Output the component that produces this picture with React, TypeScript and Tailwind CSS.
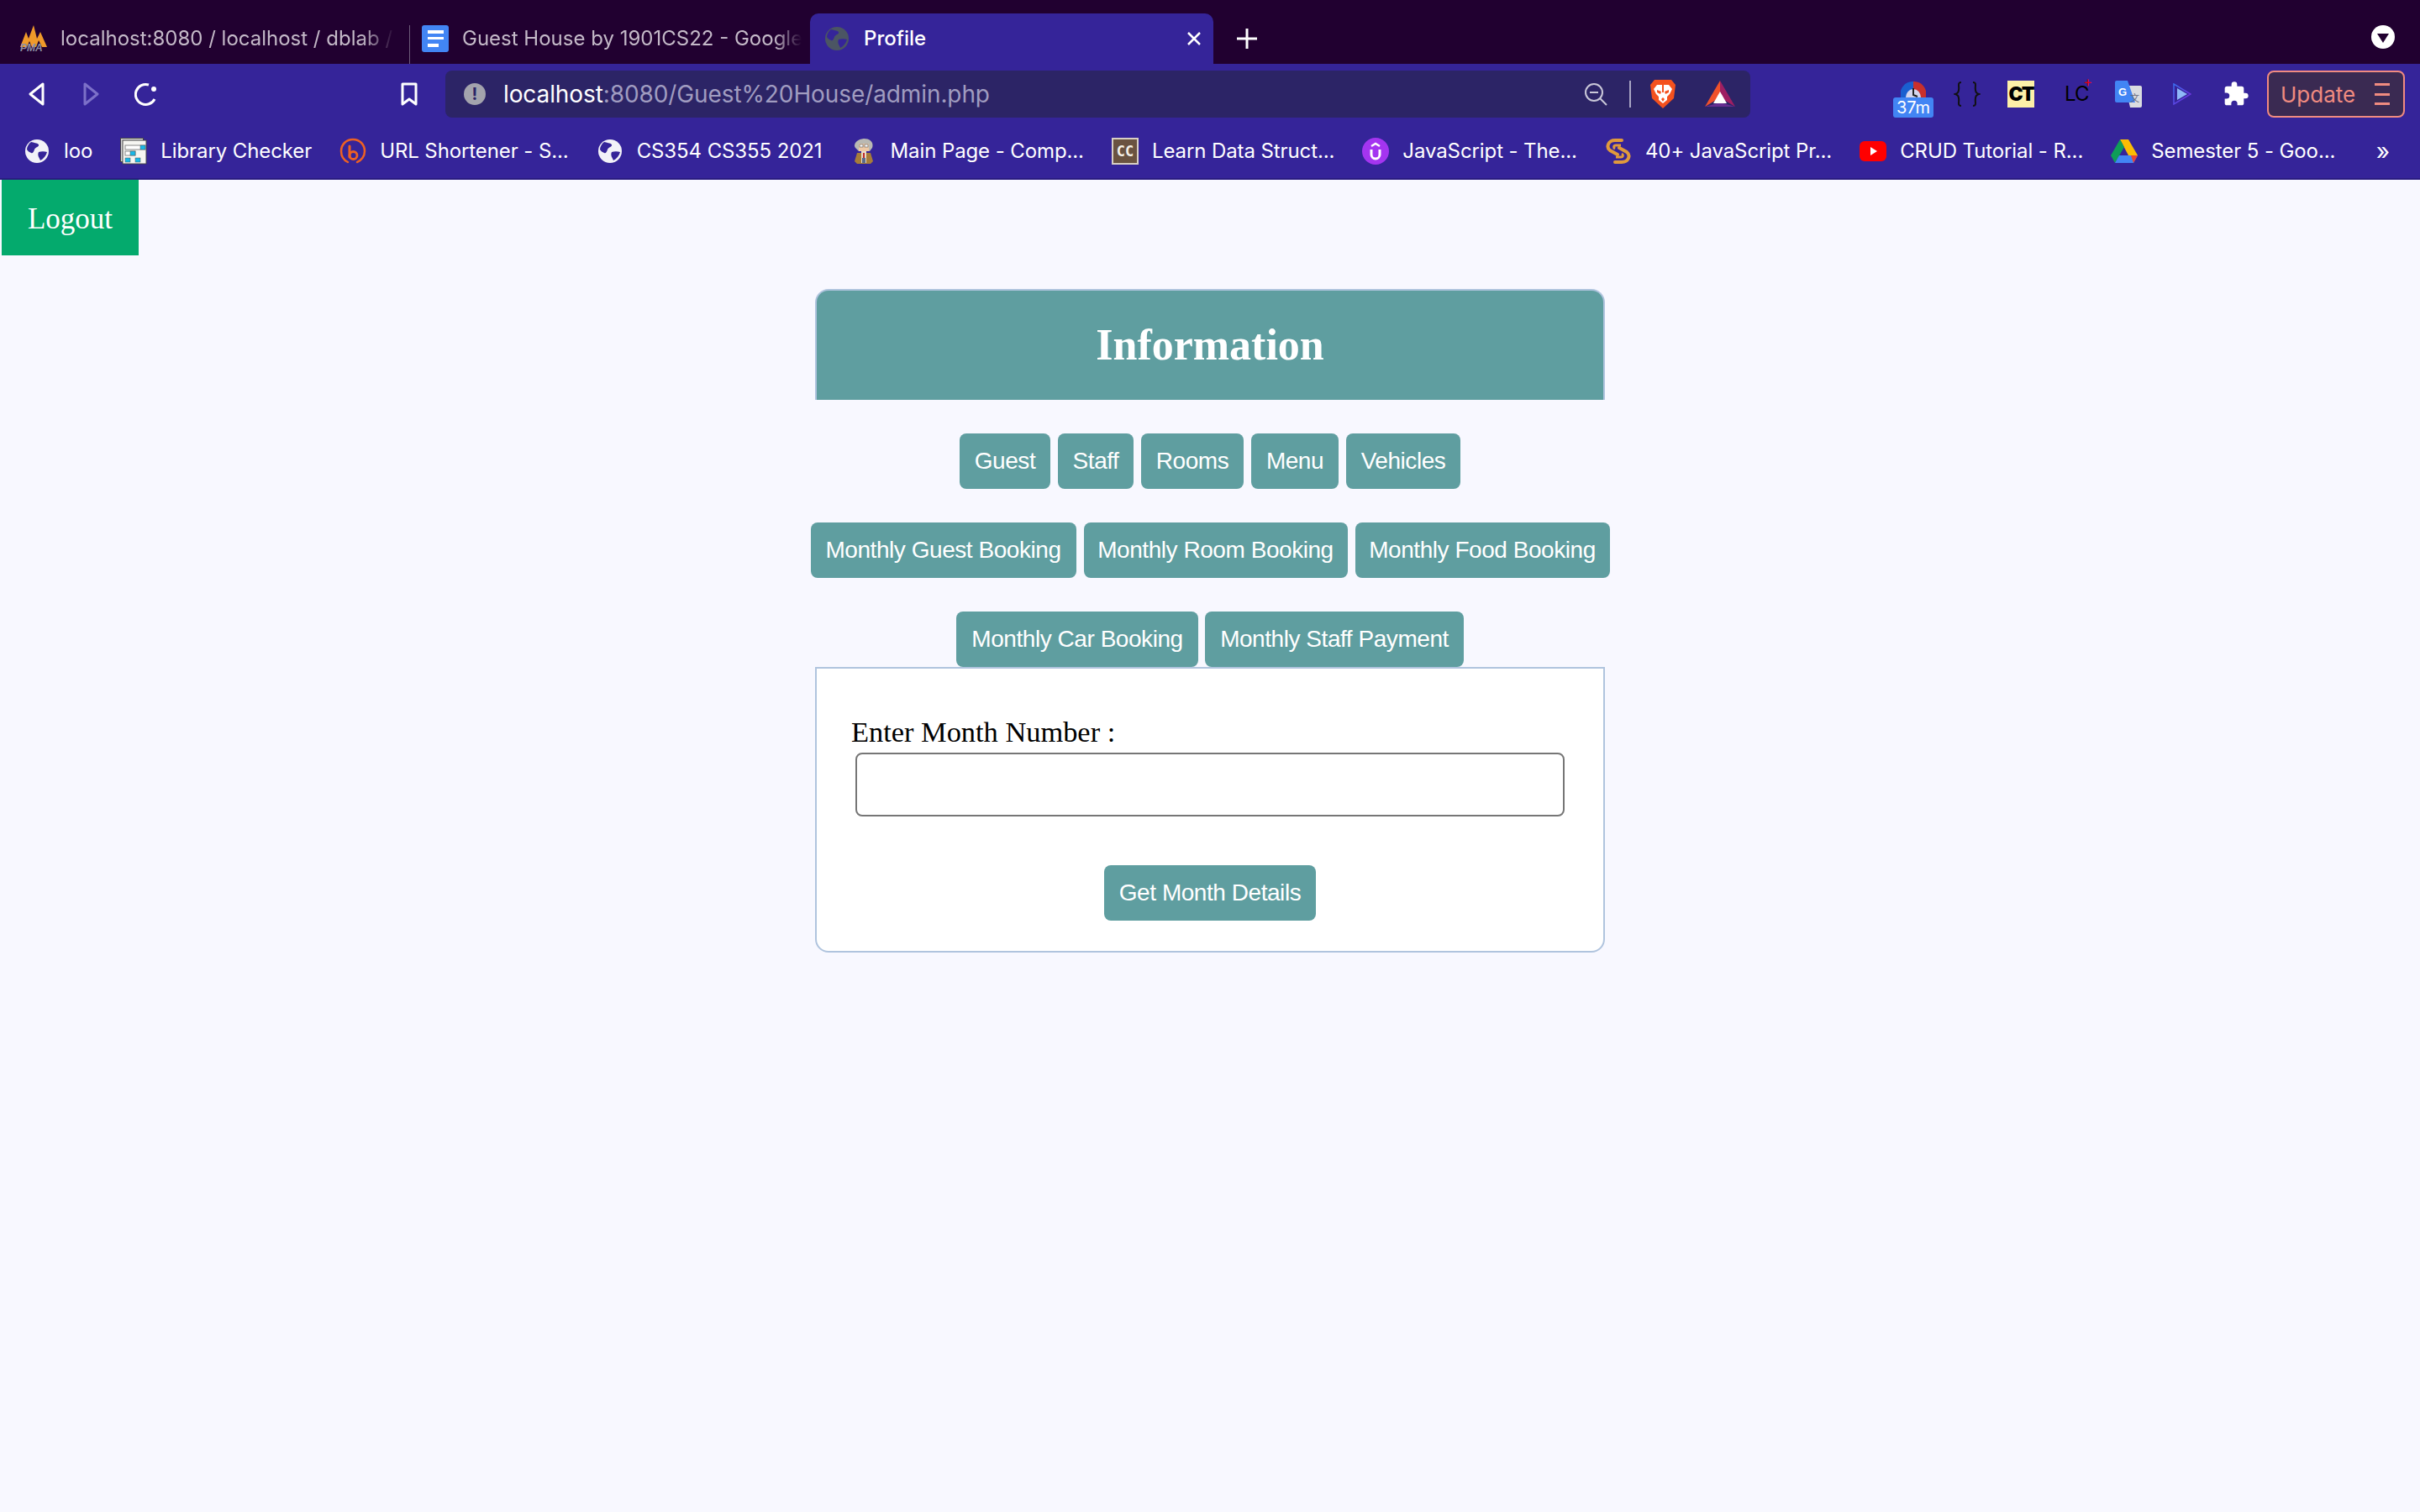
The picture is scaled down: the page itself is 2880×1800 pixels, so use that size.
import React from 'react';

const serif = "font-['Liberation_Serif',serif]";

const Globe = ({ color = '#f2f2f8', land = '#352499' }: { color?: string; land?: string }) => (
  <svg width="28" height="28" viewBox="0 0 28 28" className="shrink-0">
    <circle cx="14" cy="14" r="14" fill={color} />
    <path d="M7 3c3 1 7 1 9 3 1 3-4 3-5 6s-2 5-4 4-4-2-5-4c0-3 2-7 5-9zM16 15c3-1 7-1 10 0-1 4-4 8-8 10-1-3-4-6-2-10z" fill={land} />
  </svg>
);

const PmaIcon = () => (
  <svg width="32" height="32" viewBox="0 0 32 32" className="shrink-0">
    <path d="M0 26 7 8l3 8L16 0l4 16 4-8 8 18z" fill="#f09a2a" />
    <path d="M8 26l3-7 3 7zM19 26l3-8 4 8z" fill="#21002f" />
    <text x="0" y="31" fontSize="12" fontStyle="italic" fontWeight="700" fill="#8d8fa5" fontFamily="Liberation Sans, sans-serif">PMA</text>
  </svg>
);

const DocsIcon = () => (
  <svg width="32" height="32" viewBox="0 0 32 32" className="shrink-0">
    <rect width="32" height="32" rx="3" fill="#4285f4" />
    <rect x="7" y="6" width="19" height="4" fill="#fff" />
    <rect x="7" y="14" width="19" height="3" fill="#fff" />
    <rect x="7" y="22" width="13" height="4" fill="#fff" />
  </svg>
);

const LibraryIcon = () => (
  <svg width="32" height="32" viewBox="0 0 32 32" className="shrink-0">
    <rect x="0.5" y="0.5" width="27" height="28" fill="#d8d8d8" stroke="#444" />
    <rect x="3" y="3" width="28" height="28" fill="#f6f6f2" stroke="#444" />
    <rect x="6" y="9" width="24" height="5" fill="#fff" stroke="#888" />
    <rect x="24" y="9" width="6" height="5" fill="#18b8e8" stroke="#555" strokeWidth=".5" />
    <rect x="6" y="16" width="12" height="5" fill="#fff" stroke="#888" />
    <rect x="12" y="16" width="6" height="5" fill="#18b8e8" stroke="#555" strokeWidth=".5" />
    <rect x="6" y="24" width="6" height="5" fill="#18b8e8" stroke="#555" strokeWidth=".5" />
    <rect x="18" y="24" width="6" height="5" fill="#18b8e8" stroke="#555" strokeWidth=".5" />
  </svg>
);

const BitlyIcon = () => (
  <svg width="32" height="32" viewBox="0 0 32 32" fill="none" className="shrink-0">
    <path d="M10 29C4 26 2 21 2 16 2 8 8 2 16 2s14 6 14 14c0 6-4 11-9 13" stroke="#ee6123" strokeWidth="2.5" strokeLinecap="round" />
    <path d="M12 10v13" stroke="#ee6123" strokeWidth="3" strokeLinecap="round" />
    <circle cx="16.500" cy="21" r="4.500" stroke="#ee6123" strokeWidth="2.800" />
  </svg>
);

const WikiIcon = () => (
  <svg width="28" height="32" viewBox="0 0 28 32" className="shrink-0">
    <path d="M4 12C1 8 5 2 14 1c8 0 12 5 10 11l-3 4H8z" fill="#b9b9b3" />
    <rect x="8" y="7" width="12" height="9" fill="#eec9a6" />
    <rect x="9" y="8" width="4" height="3" fill="#fff" stroke="#666" strokeWidth=".7" />
    <rect x="15" y="8" width="4" height="3" fill="#fff" stroke="#666" strokeWidth=".7" />
    <path d="M6 18h16l3 10-3 3H6l-3-3z" fill="#a77c39" />
    <rect x="11" y="16" width="6" height="14" fill="#e8dcc8" />
    <rect x="13" y="18" width="2" height="6" fill="#c02a2a" />
    <rect x="12" y="24" width="4" height="6" fill="#5a6a8a" />
  </svg>
);

const CcIcon = () => (
  <svg width="32" height="32" viewBox="0 0 32 32" className="shrink-0">
    <rect width="32" height="32" fill="#d8cfc4" />
    <rect x="2" y="2" width="28" height="28" fill="#6a5340" />
    <text x="16" y="22" textAnchor="middle" fontSize="17" fontWeight="700" fill="#f5f1e8" fontFamily="DejaVu Sans Mono, monospace">CC</text>
  </svg>
);

const UdemyIcon = () => (
  <svg width="32" height="32" viewBox="0 0 32 32" fill="none" className="shrink-0">
    <circle cx="16" cy="16" r="16" fill="#a435f0" />
    <path d="M11 14v6a5 5 0 0 0 10 0v-6" stroke="#fff" strokeWidth="3" />
    <path d="M11 10l5-3 5 3" stroke="#fff" strokeWidth="2.500" />
  </svg>
);

const SwirlIcon = () => (
  <svg width="32" height="32" viewBox="0 0 32 32" fill="none" className="shrink-0">
    <path d="M20 3h-8C4 3 1 11 6 15l9 5" stroke="#e19a3c" strokeWidth="4" strokeLinecap="round" />
    <path d="M12 29h8c8 0 11-8 6-12l-9-5" stroke="#e19a3c" strokeWidth="4" strokeLinecap="round" />
    <path d="M19 9h-6c-3 0-3 3-1 4" stroke="#e19a3c" strokeWidth="3" />
    <path d="M13 23h6c3 0 3-3 1-4" stroke="#e19a3c" strokeWidth="3" />
  </svg>
);

const YoutubeIcon = () => (
  <svg width="32" height="24" viewBox="0 0 32 24" className="shrink-0">
    <rect width="32" height="24" rx="6" fill="#f00" />
    <path d="M13 7l8 5-8 5z" fill="#fff" />
  </svg>
);

const DriveIcon = () => (
  <svg width="32" height="32" viewBox="0 0 32 32" className="shrink-0">
    <path d="M11 2h10l11 19H21z" fill="#fbbc04" />
    <path d="M11 2 0 21l5 9 11-19z" fill="#0f9d58" />
    <path d="M5 30l5-9h22l-5 9z" fill="#4285f4" />
    <path d="M27 30l5-9h-8z" fill="#ea4335" />
  </svg>
);

const BraveIcon = () => (
  <svg width="32" height="36" viewBox="0 0 32 36" className="ml-[22px] shrink-0">
    <path d="M6 1h20l5 6-2 16-13 12L3 23 1 7z" fill="#f4511e" />
    <path d="M9 7h14l4 5-3 6-3 3v4l-5 4-5-4v-4l-3-3-3-6z" fill="#fff" />
    <path d="M9 13l5 2-1 3-4-2zM23 13l-5 2 1 3 4-2zM15 7h2v9h-2zM14 24l2-2 2 2-2 3z" fill="#f4511e" />
  </svg>
);

const BatIcon = () => (
  <svg width="36" height="32" viewBox="0 0 36 32" className="ml-[34px] shrink-0">
    <path d="M18 0 0 31l18-11z" fill="#f0512b" />
    <path d="M18 0l18 31-18-11z" fill="#9e1f63" />
    <path d="M0 31l18-5 18 5z" fill="#662d91" />
    <path d="M18 13l-8 14h16z" fill="#fff" />
  </svg>
);

const BookmarkItem = ({ icon, label }: { icon: React.ReactNode; label: string }) => (
  <div className="flex shrink-0 items-center">
    <div className="flex w-[32px] justify-center">{icon}</div>
    <span className="ml-[16px] text-[24px] leading-[32px] tracking-[-0.1px] whitespace-nowrap text-white">{label}</span>
  </div>
);

const PageButton = ({ label, width }: { label: string; width: string }) => (
  <button className={`h-[66px] ${width} shrink-0 rounded-[8px] bg-[#5f9ea0] font-['Liberation_Sans',sans-serif] text-[28px] tracking-[-0.45px] text-white`}>
    {label}
  </button>
);

export default function App() {
  return (
    <div className="flex min-h-[1800px] w-[2880px] flex-col bg-[#f8f8ff] font-['Inter',sans-serif]">
      {/* Tab strip */}
      <div className="flex h-[76px] items-end bg-[#210030] pl-[24px]">
        <div className="flex h-[76px] w-[463px] items-center gap-[16px] pt-[16px] text-[24px] whitespace-nowrap text-[#c4b9c8]">
          <PmaIcon />
          <span className="w-[398px] overflow-hidden [mask-image:linear-gradient(to_right,black_90%,transparent)]">localhost:8080 / localhost / dblab / /</span>
        </div>
        <div className="h-[46px] w-px bg-[#6d5a78]" />
        <div className="flex h-[76px] w-[476px] items-center gap-[16px] pt-[16px] pl-[14px] text-[24px] whitespace-nowrap text-[#c4b9c8]">
          <DocsIcon />
          <span className="w-[404px] overflow-hidden [mask-image:linear-gradient(to_right,black_92%,transparent)]">Guest House by 1901CS22 - Google</span>
        </div>
        <div className="flex h-[60px] w-[480px] items-center rounded-t-[10px] bg-[#352499] pr-[14px] pl-[18px] text-[24px] font-medium text-white">
          <Globe color="#4b5563" land="#352499" />
          <span className="ml-[18px]">Profile</span>
          <svg width="18" height="18" viewBox="0 0 18 18" className="ml-auto" stroke="#fff" strokeWidth="2.5">
            <path d="M2 2l14 14M16 2 2 16" />
          </svg>
        </div>
        <svg width="24" height="24" viewBox="0 0 24 24" className="mb-[18px] ml-[28px]" stroke="#fff" strokeWidth="3">
          <path d="M12 0v24M0 12h24" />
        </svg>
        <div className="mr-[30px] mb-[18px] ml-auto flex h-[28px] w-[28px] items-center justify-center rounded-full bg-white">
          <div className="mt-[3px] h-0 w-0 border-x-[7px] border-t-[11px] border-x-transparent border-t-[#210030]" />
        </div>
      </div>

      {/* Toolbar */}
      <div className="flex h-[72px] items-center bg-[#352499] pl-[34px]">
        <svg width="20" height="28" viewBox="0 0 20 28" fill="none" stroke="#fff" strokeWidth="3" strokeLinejoin="round">
          <path d="M17 2v24L2 14z" />
        </svg>
        <svg width="20" height="28" viewBox="0 0 20 28" fill="none" stroke="#7c70c8" strokeWidth="3" strokeLinejoin="round" className="ml-[44px]">
          <path d="M3 2v24l15-12z" />
        </svg>
        <svg width="28" height="28" viewBox="0 0 28 28" fill="none" stroke="#fff" strokeWidth="3" className="ml-[42px]">
          <path d="M24 20A12 12 0 1 1 17 3" />
          <circle cx="23" cy="8" r="3" fill="#fff" stroke="none" />
        </svg>
        <svg width="22" height="28" viewBox="0 0 22 28" fill="none" stroke="#fff" strokeWidth="3" strokeLinejoin="round" className="ml-[288px]">
          <path d="M3 2h16v24l-8-6-8 6z" />
        </svg>
        <div className="ml-[32px] flex h-[56px] w-[1553px] shrink-0 items-center rounded-[8px] bg-[#2c2466] pr-[18px] pl-[22px]">
          <div className="flex h-[26px] w-[26px] items-center justify-center rounded-full bg-[#a3a3ad] text-[20px] leading-none font-bold text-[#2c2466]">!</div>
          <span className="ml-[21px] text-[28px] tracking-[-0.1px] text-white">localhost</span>
          <span className="text-[28px] tracking-[-0.1px] text-[#a09cc0]">:8080/Guest%20House/admin.php</span>
          <svg width="28" height="28" viewBox="0 0 28 28" fill="none" stroke="#c9c7d8" strokeWidth="2" className="ml-auto">
            <circle cx="12" cy="12" r="10" />
            <path d="M7 12h10M19 19l8 8" />
          </svg>
          <div className="ml-[26px] h-[32px] w-[2px] bg-[#a8a5c4]" />
          <BraveIcon />
          <BatIcon />
        </div>
        <div className="ml-[170px] flex w-[48px] shrink-0 flex-col items-center pt-[12px]">
          <svg width="30" height="19" viewBox="0 0 30 19">
            <path d="M0 19a15 15 0 0 1 15-19v19z" fill="#1a5fd0" />
            <path d="M15 0a15 15 0 0 1 15 19H15z" fill="#c9302c" />
            <path d="M6 19a9 10 0 0 1 18 0z" fill="#d6d6ee" />
            <path d="M15 8v8l5 2" stroke="#222" strokeWidth="2" fill="none" />
          </svg>
          <div className="flex h-[24px] w-[48px] items-center justify-center rounded-[3px] bg-[#4285f4] text-[20px] leading-none text-white">37m</div>
        </div>
        <svg width="32" height="30" viewBox="0 0 32 30" fill="none" stroke="#111" strokeWidth="2" className="ml-[24px] shrink-0">
          <path d="M9 1C4 1 7 6 6 10c0 3-1 4-4 5 3 1 4 2 4 5 1 4-2 9 3 9" />
          <path d="M23 1c5 0 2 5 3 9 0 3 1 4 4 5-3 1-4 2-4 5-1 4 2 9-3 9" />
        </svg>
        <div className="ml-[32px] flex h-[32px] w-[32px] shrink-0 items-center justify-center bg-[#fdf0a8] text-[23px] leading-none font-black tracking-[-2px] text-black">CT</div>
        <div className="relative ml-[36px] w-[28px] shrink-0 text-[24px] leading-none tracking-[-1px] text-black">
          LC
          <span className="absolute -top-[11px] right-[-4px] text-[16px] text-red-600">+</span>
        </div>
        <svg width="32" height="32" viewBox="0 0 32 32" className="ml-[32px] shrink-0">
          <path d="M12 6h18a2 2 0 0 1 2 2v22a2 2 0 0 1-2 2H18z" fill="#dadce0" />
          <path d="M2 0h13l9 26H2a2 2 0 0 1-2-2V2a2 2 0 0 1 2-2z" fill="#4285f4" />
          <text x="4" y="18" fontSize="13" fontWeight="700" fill="#fff" fontFamily="Liberation Sans, sans-serif">G</text>
          <text x="18" y="25" fontSize="11" fill="#667" fontFamily="Noto Sans CJK SC, sans-serif">文</text>
        </svg>
        <svg width="22" height="26" viewBox="0 0 22 26" className="ml-[37px] shrink-0">
          <defs>
            <linearGradient id="playStroke" x1="0" y1="0" x2="1" y2="1">
              <stop offset="0" stopColor="#3a6ff0" />
              <stop offset="1" stopColor="#7a22d8" />
            </linearGradient>
          </defs>
          <path d="M1 1v24l20-12z" fill="none" stroke="url(#playStroke)" strokeWidth="1.500" />
          <path d="M5 6v14l12-7z" fill="#8fb8f8" />
        </svg>
        <svg width="32" height="32" viewBox="0 0 24 24" fill="#fff" className="ml-[37px] shrink-0">
          <path d="M20.500 11H19V7a2 2 0 0 0-2-2h-4V3.500a2.500 2.500 0 0 0-5 0V5H4a2 2 0 0 0-2 2v3.800h1.500a2.700 2.700 0 0 1 0 5.400H2V20a2 2 0 0 0 2 2h3.800v-1.500a2.700 2.700 0 0 1 5.400 0V22H17a2 2 0 0 0 2-2v-4h1.500a2.500 2.500 0 0 0 0-5z" />
        </svg>
        <div className="ml-[21px] flex h-[56px] w-[164px] shrink-0 items-center justify-between rounded-[8px] border-2 border-[#f08b80] bg-[#3a2a52] pr-[16px] pl-[14px] text-[26px] text-[#f08b80]">
          <span>Update</span>
          <div className="flex h-[26px] flex-col justify-between">
            <div className="h-[3px] w-[18px] bg-[#f08b80]" />
            <div className="h-[3px] w-[18px] bg-[#f08b80]" />
            <div className="h-[3px] w-[18px] bg-[#f08b80]" />
          </div>
        </div>
      </div>

      {/* Bookmarks bar */}
      <div className="flex h-[66px] items-center gap-[33px] border-b-2 border-[#2a1c80] bg-[#352499] pr-[36px] pl-[28px]">
        <BookmarkItem icon={<Globe />} label="loo" />
        <BookmarkItem icon={<LibraryIcon />} label="Library Checker" />
        <BookmarkItem icon={<BitlyIcon />} label="URL Shortener - S..." />
        <BookmarkItem icon={<Globe />} label="CS354 CS355 2021" />
        <BookmarkItem icon={<WikiIcon />} label="Main Page - Comp..." />
        <BookmarkItem icon={<CcIcon />} label="Learn Data Struct..." />
        <BookmarkItem icon={<UdemyIcon />} label="JavaScript - The..." />
        <BookmarkItem icon={<SwirlIcon />} label="40+ JavaScript Pr..." />
        <BookmarkItem icon={<YoutubeIcon />} label="CRUD Tutorial - R..." />
        <BookmarkItem icon={<DriveIcon />} label="Semester 5 - Goo..." />
        <span className="ml-auto text-[28px] leading-none text-white">»</span>
      </div>

      {/* Page */}
      <div className="flex flex-col">
        <div className="pl-[2px]">
          <button className={`h-[90px] w-[163px] bg-[#04aa6d] pt-[4px] text-[35px] text-white ${serif}`}>Logout</button>
        </div>

        <div className="mx-auto mt-[40px] flex w-[940px] flex-col items-center">
          <div className={`flex h-[132px] w-full items-center justify-center rounded-t-[16px] border-x-2 border-t-2 border-[#b0c4de] bg-[#5f9ea0] text-[52px] font-bold text-white ${serif}`}>
            Information
          </div>
          <div className="mt-[40px] flex justify-center gap-[9px]">
            <PageButton label="Guest" width="w-[108px]" />
            <PageButton label="Staff" width="w-[90px]" />
            <PageButton label="Rooms" width="w-[122px]" />
            <PageButton label="Menu" width="w-[104px]" />
            <PageButton label="Vehicles" width="w-[136px]" />
          </div>
          <div className="mt-[40px] flex justify-center gap-[9px]">
            <PageButton label="Monthly Guest Booking" width="w-[316px]" />
            <PageButton label="Monthly Room Booking" width="w-[314px]" />
            <PageButton label="Monthly Food Booking" width="w-[303px]" />
          </div>
          <div className="mt-[40px] flex justify-center gap-[8px]">
            <PageButton label="Monthly Car Booking" width="w-[288px]" />
            <PageButton label="Monthly Staff Payment" width="w-[308px]" />
          </div>
          <div className="flex h-[340px] w-full flex-col rounded-b-[16px] border-2 border-[#b0c4de] bg-white pt-[55px] pl-[41px]">
            <label className={`text-[34.4px] leading-[41px] text-black ${serif}`}>Enter Month Number :</label>
            <input className="mt-[4px] ml-[5px] h-[76px] w-[844px] rounded-[8px] border-2 border-[#767676] bg-white" />
            <button className="mt-[58px] ml-[301px] h-[66px] w-[252px] rounded-[8px] bg-[#5f9ea0] font-['Liberation_Sans',sans-serif] text-[28px] tracking-[-0.45px] text-white">
              Get Month Details
            </button>
          </div>
        </div>
      </div>
    </div>
  );
}
